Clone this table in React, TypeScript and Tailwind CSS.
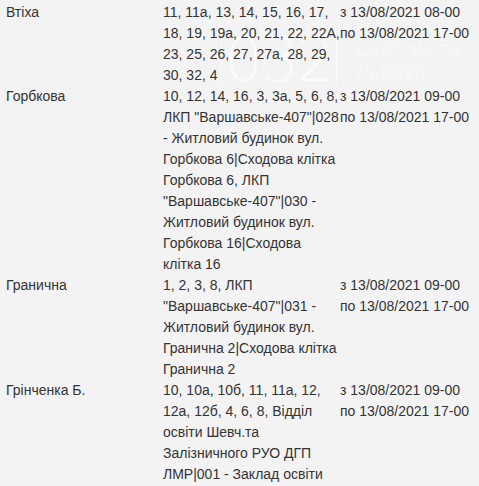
import React from "react";

type Row = { street: string; houses: string[]; time: string[] };

const rows: Row[] = [
  {
    street: "Втіха",
    houses: [
      "11, 11а, 13, 14, 15, 16, 17,",
      "18, 19, 19а, 20, 21, 22, 22А,",
      "23, 25, 26, 27, 27а, 28, 29,",
      "30, 32, 4",
    ],
    time: ["з 13/08/2021 08-00", "по 13/08/2021 17-00"],
  },
  {
    street: "Горбкова",
    houses: [
      "10, 12, 14, 16, 3, 3а, 5, 6, 8,",
      'ЛКП "Варшавське-407"|028',
      "- Житловий будинок вул.",
      "Горбкова 6|Сходова клітка",
      "Горбкова 6, ЛКП",
      '"Варшавське-407"|030 -',
      "Житловий будинок вул.",
      "Горбкова 16|Сходова",
      "клітка 16",
    ],
    time: ["з 13/08/2021 09-00", "по 13/08/2021 17-00"],
  },
  {
    street: "Гранична",
    houses: [
      "1, 2, 3, 8, ЛКП",
      '"Варшавське-407"|031 -',
      "Житловий будинок вул.",
      "Гранична 2|Сходова клітка",
      "Гранична 2",
    ],
    time: ["з 13/08/2021 09-00", "по 13/08/2021 17-00"],
  },
  {
    street: "Грінченка Б.",
    houses: [
      "10, 10а, 10б, 11, 11а, 12,",
      "12а, 12б, 4, 6, 8, Відділ",
      "освіти Шевч.та",
      "Залізничного РУО ДГП",
      "ЛМР|001 - Заклад освіти",
    ],
    time: ["з 13/08/2021 09-00", "по 13/08/2021 17-00"],
  },
];

export default function App() {
  return (
    <div className="relative min-h-[486px] w-[479px] overflow-hidden bg-[#f3f3f3] pt-[2px] pl-[6px] font-['Liberation_Sans',Arial,sans-serif] text-[14px] leading-[21px] text-[#333]">
      {/* faint site watermark behind the table */}
      <div className="pointer-events-none absolute left-[221px] top-[18px] flex items-center gap-[18px] text-white opacity-60">
        <div className="flex h-[84px] w-[116px] items-center justify-center rounded-[20px] border-[1.5px] border-white">
          <span className="font-['DejaVu_Sans',sans-serif] text-[60px] font-extralight leading-none tracking-[-2px]">032</span>
        </div>
        <div className="flex flex-col font-['DejaVu_Sans',sans-serif] text-[19px] font-extralight leading-[22px]">
          <span>Сайт міста</span>
          <span>Львова</span>
        </div>
      </div>

      <div className="relative">
        {rows.map((r) => (
          <div key={r.street} className="grid grid-cols-[157px_177px_1fr]">
            <div>{r.street}</div>
            <div className="whitespace-nowrap">
              {r.houses.map((h, i) => (
                <div key={i}>{h}</div>
              ))}
            </div>
            <div className="whitespace-nowrap">
              {r.time.map((t, i) => (
                <div key={i}>{t}</div>
              ))}
            </div>
          </div>
        ))}
      </div>
    </div>
  );
}
